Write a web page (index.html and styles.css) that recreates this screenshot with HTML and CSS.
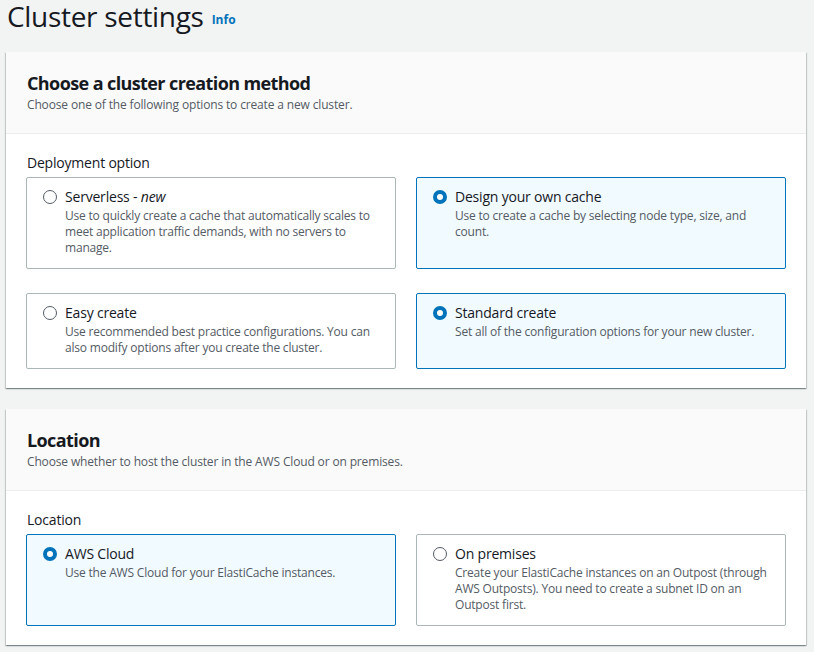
FILE: index.html
```html
<!DOCTYPE html>
<html>
<head>
<meta charset="utf-8">
<link rel="stylesheet" href="styles.css">
</head>
<body>
<div class="page">
  <h1 class="page-title">Cluster settings <a class="info">Info</a></h1>

  <section class="panel">
    <div class="panel-header">
      <h2 class="panel-title">Choose a cluster creation method</h2>
      <p class="panel-desc">Choose one of the following options to create a new cluster.</p>
    </div>
    <div class="panel-body">
      <div class="field-label">Deployment option</div>
      <div class="tiles">
        <div class="tile">
          <span class="radio"></span>
          <div class="tile-text">
            <div class="tile-title">Serverless - <em>new</em></div>
            <div class="tile-desc">Use to quickly create a cache that automatically scales to meet application traffic demands, with no servers to manage.</div>
          </div>
        </div>
        <div class="tile selected">
          <span class="radio on"></span>
          <div class="tile-text">
            <div class="tile-title">Design your own cache</div>
            <div class="tile-desc">Use to create a cache by selecting node type, size, and count.</div>
          </div>
        </div>
        <div class="tile">
          <span class="radio"></span>
          <div class="tile-text">
            <div class="tile-title">Easy create</div>
            <div class="tile-desc">Use recommended best practice configurations. You can also modify options after you create the cluster.</div>
          </div>
        </div>
        <div class="tile selected">
          <span class="radio on"></span>
          <div class="tile-text">
            <div class="tile-title">Standard create</div>
            <div class="tile-desc">Set all of the configuration options for your new cluster.</div>
          </div>
        </div>
      </div>
    </div>
  </section>

  <section class="panel">
    <div class="panel-header">
      <h2 class="panel-title">Location</h2>
      <p class="panel-desc">Choose whether to host the cluster in the AWS Cloud or on premises.</p>
    </div>
    <div class="panel-body">
      <div class="field-label">Location</div>
      <div class="tiles">
        <div class="tile selected tall">
          <span class="radio on"></span>
          <div class="tile-text">
            <div class="tile-title">AWS Cloud</div>
            <div class="tile-desc">Use the AWS Cloud for your ElastiCache instances.</div>
          </div>
        </div>
        <div class="tile tall">
          <span class="radio"></span>
          <div class="tile-text">
            <div class="tile-title">On premises</div>
            <div class="tile-desc">Create your ElastiCache instances on an Outpost (through AWS Outposts). You need to create a subnet ID on an Outpost first.</div>
          </div>
        </div>
      </div>
    </div>
  </section>
</div>
</body>
</html>
```

FILE: styles.css
```css
* { box-sizing: border-box; }
html, body {
  margin: 0;
  padding: 0;
  background: #f2f3f3;
  font-family: "Open Sans", "Noto Sans", sans-serif;
  color: #16191f;
}
.page {
  padding: 0 8px 0 6px;
  width: 814px;
}
.page-title {
  margin: 0;
  padding: 1px 0 0 1px;
  font-size: 28px;
  font-weight: 400;
  line-height: 30px;
  height: 52px;
  letter-spacing: -0.3px;
}
.info {
  font-size: 12px;
  font-weight: 700;
  color: #0073bb;
  margin-left: 1px;
  letter-spacing: 0;
  vertical-align: 3px;
}
.panel {
  width: 800px;
  background: #fff;
  box-shadow: 0 1px 1px 0 rgba(0,28,36,.3), 1px 1px 1px 0 rgba(0,28,36,.15), -1px 1px 1px 0 rgba(0,28,36,.15);
  margin-bottom: 21px;
}
.panel-header {
  background: #fafafa;
  border-bottom: 1px solid #eaeded;
  padding: 20px 20px 20px 21px;
}
.panel-title {
  margin: 0;
  font-size: 18px;
  font-weight: 700;
  line-height: 22px;
  letter-spacing: -0.6px;
}
.panel-desc {
  margin: 3px 0 0;
  font-size: 12px;
  line-height: 16px;
  color: #545b64;
  letter-spacing: -0.15px;
}
.panel-body {
  padding: 19px 20px 19px;
}
.field-label {
  font-size: 14px;
  line-height: 20px;
  margin-bottom: 4px;
  padding-left: 1px;
  letter-spacing: -0.2px;
}
.tiles {
  display: grid;
  grid-template-columns: 370px 370px;
  column-gap: 20px;
  row-gap: 24px;
}
.tile {
  display: flex;
  align-items: flex-start;
  gap: 8px;
  border: 1px solid #aab7b8;
  border-radius: 2px;
  padding: 8px 12px 12px 16px;
  background: #fff;
}
.tile.selected {
  border-color: #0073bb;
  background: #f1faff;
}
.tile.tall { min-height: 92px; }
.radio {
  flex: none;
  width: 14px;
  height: 14px;
  margin-top: 4px;
  border-radius: 50%;
  border: 1.5px solid #545b64;
  background: #fff;
}
.radio.on {
  border: 4.5px solid #0073bb;
}
.tile-text { flex: 1; }
.tile-title {
  font-size: 14px;
  line-height: 22px;
  letter-spacing: -0.2px;
}
.tile-desc {
  font-size: 12px;
  line-height: 16px;
  color: #545b64;
  letter-spacing: -0.2px;
}
```
